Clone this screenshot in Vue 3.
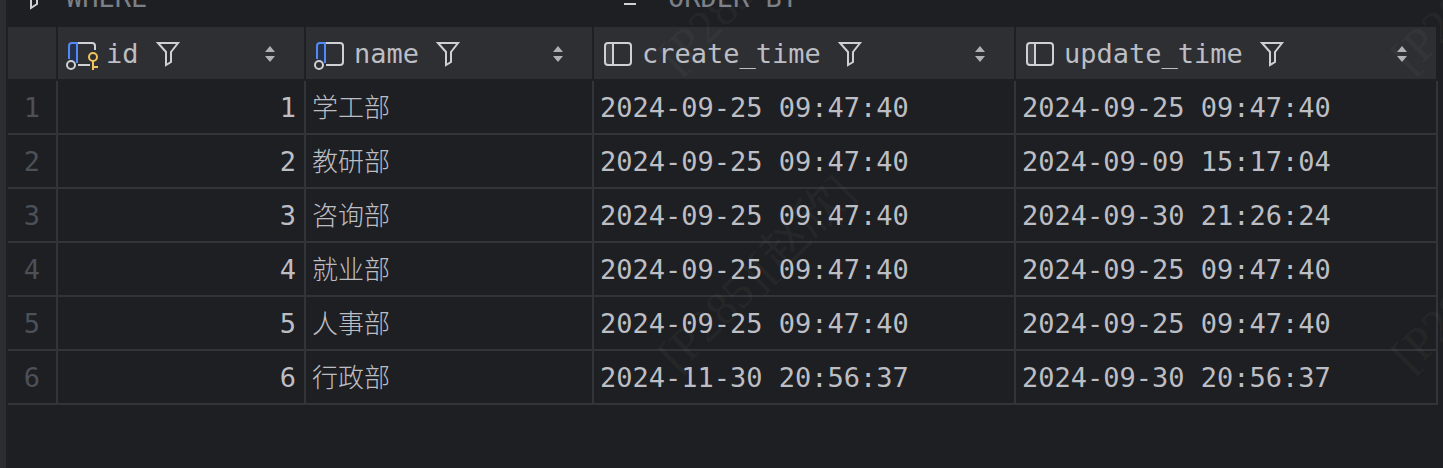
<script setup>
const columns = [
  { name: 'id', icon: 'primary' },
  { name: 'name', icon: 'indexed' },
  { name: 'create_time', icon: 'plain' },
  { name: 'update_time', icon: 'plain' },
]

const rows = [
  [1, '学工部', '2024-09-25 09:47:40', '2024-09-25 09:47:40'],
  [2, '教研部', '2024-09-25 09:47:40', '2024-09-09 15:17:04'],
  [3, '咨询部', '2024-09-25 09:47:40', '2024-09-30 21:26:24'],
  [4, '就业部', '2024-09-25 09:47:40', '2024-09-25 09:47:40'],
  [5, '人事部', '2024-09-25 09:47:40', '2024-09-25 09:47:40'],
  [6, '行政部', '2024-11-30 20:56:37', '2024-09-30 20:56:37'],
]

const watermarks = [
  { x: 678, y: 75 },
  { x: 1411, y: 75 },
  { x: 678, y: 374 },
  { x: 1411, y: 374 },
]
</script>

<template>
  <main class="panel">
    <div class="filters">
      <label class="filter where">
        <svg class="lead" width="32" height="32" viewBox="0 0 32 32" fill="none" stroke="#ced0d6" stroke-width="2">
          <path d="M5 3H27L19 13V22L13 26V13Z" />
        </svg>
        <span>WHERE</span>
      </label>
      <label class="filter">
        <svg class="lead" width="32" height="32" viewBox="0 0 32 32" fill="none" stroke="#ced0d6" stroke-width="2">
          <path d="M4 7H28M4 14H22M4 22H16" />
        </svg>
        <span>ORDER BY</span>
      </label>
    </div>

    <table class="grid">
      <colgroup>
        <col class="c-gutter" />
        <col class="c-id" />
        <col class="c-name" />
        <col class="c-time" />
        <col />
      </colgroup>
      <thead>
        <tr>
          <th aria-label="Row"></th>
          <th v-for="col in columns" :key="col.name" scope="col">
            <div class="head">
              <svg class="kind" width="32" height="32" viewBox="0 0 32 32" fill="none" stroke-width="2">
                <template v-if="col.icon === 'plain'">
                  <path d="M3 6H11V26H5Q3 26 3 24Z" fill="#43454a" />
                  <rect x="3" y="5" width="26" height="22" rx="3" stroke="#ced0d6" />
                  <path d="M11 5V27" stroke="#ced0d6" />
                </template>
                <template v-else>
                  <path d="M3 5H11V25L3 21Z" fill="#25324d" />
                  <path d="M3 21V8Q3 5 6 5H11V25" stroke="#548af7" />
                  <path v-if="col.icon === 'indexed'" d="M12 5H26Q29 5 29 8V24Q29 27 26 27H12" stroke="#ced0d6" />
                  <path v-else d="M12 5H26Q29 5 29 8V12M12 27H24" stroke="#ced0d6" />
                  <circle cx="5" cy="27" r="4" stroke="#ced0d6" />
                  <g v-if="col.icon === 'primary'" stroke="#f2c55c">
                    <circle cx="27" cy="19" r="4" />
                    <path d="M27 23V32M27 29H32" />
                  </g>
                </template>
              </svg>
              <span>{{ col.name }}</span>
              <button type="button" class="funnel" :aria-label="`Filter ${col.name}`">
                <svg width="26" height="28" viewBox="0 0 26 28" fill="none" stroke="#ced0d6" stroke-width="2">
                  <path d="M3 3H23L16 12V22L11 25V12Z" />
                </svg>
              </button>
              <button type="button" class="sort" :aria-label="`Sort ${col.name}`">
                <svg width="10" height="16" viewBox="0 0 10 16" fill="#afb1b5">
                  <path d="M0 6L5 0L10 6ZM0 10H10L5 16Z" />
                </svg>
              </button>
            </div>
          </th>
        </tr>
      </thead>
      <tbody>
        <tr v-for="row in rows" :key="row[0]">
          <th scope="row">{{ row[0] }}</th>
          <td v-for="(cell, i) in row" :key="i" :class="{ num: i === 0, han: i === 1 }">{{ cell }}</td>
        </tr>
      </tbody>
    </table>

    <svg class="watermark" aria-hidden="true">
      <text v-for="(w, i) in watermarks" :key="i" :transform="`translate(${w.x} ${w.y}) rotate(-45)`">[P285][赵欣]</text>
    </svg>
  </main>
</template>

<style>
body {
  background: #1e1f22;
}
</style>

<style scoped>
.panel {
  position: relative;
  box-sizing: border-box;
  min-height: 100vh;
  overflow: hidden;
  padding: 0 5px 0 2px;
  border-left: 6px solid #2b2d30;
  background: #1e1f22;
  color: #bcbec4;
  font: 27px/32px "DejaVu Sans Mono", "Noto Sans CJK SC", monospace;
}
.filters {
  display: flex;
  align-items: flex-end;
  height: 27px;
}
.filter {
  display: flex;
  flex: 1;
  align-items: center;
  gap: 16px;
  margin-bottom: 13px;
  color: #7c8088;
}
.where {
  flex: 0 0 612px;
  padding-left: 10px;
  box-sizing: border-box;
}
.grid {
  width: 100%;
  table-layout: fixed;
  border-collapse: separate;
  border-spacing: 0;
}
.c-gutter {
  width: 50px;
}
.c-id {
  width: 248px;
}
.c-name {
  width: 288px;
}
.c-time {
  width: 422px;
}
th,
td {
  box-sizing: border-box;
  height: 54px;
  padding: 2px 8px 0 6px;
  border-right: 2px solid #313438;
  border-bottom: 2px solid #313438;
  font-weight: 400;
  text-align: left;
  white-space: nowrap;
}
thead th {
  padding-left: 8px;
  border-color: #1e1f22;
  background: #2e2f33;
}
tbody th {
  padding: 2px 0 0;
  color: #4b5059;
  text-align: center;
}
.num {
  text-align: right;
}
.han {
  font-size: 26px;
  font-weight: 300;
}
.head {
  display: flex;
  align-items: center;
}
.kind {
  margin-right: 8px;
  overflow: visible;
}
button {
  display: flex;
  padding: 0;
  border: 0;
  background: none;
}
.funnel {
  margin-left: 16px;
}
.sort {
  margin-left: auto;
  margin-right: 21px;
}
.watermark {
  position: absolute;
  top: 0;
  left: -6px;
  width: 100vw;
  height: 100%;
  pointer-events: none;
  fill: #ffffff;
  fill-opacity: 0.05;
  font: 47px "Liberation Serif", "Noto Sans CJK SC", serif;
}
</style>
